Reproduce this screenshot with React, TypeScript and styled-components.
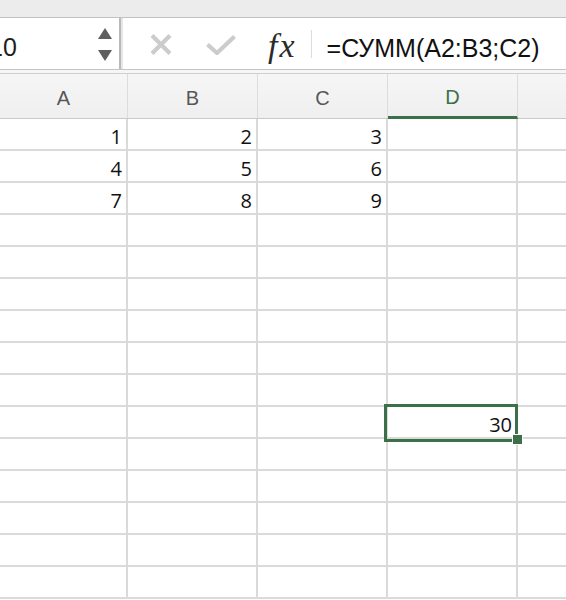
import React from 'react';
import styled, { createGlobalStyle } from 'styled-components';

const GlobalStyle = createGlobalStyle`
  html, body {
    margin: 0;
    padding: 0;
    background: #fff;
    overflow: hidden;
  }
  body {
    font-family: 'Liberation Sans', Arial, sans-serif;
  }
`;

const GREEN = '#3c7049';
const GRID = '#dadada';

const Window = styled.div`
  width: 566px;
  height: 600px;
  overflow: hidden;
  display: flex;
  flex-direction: column;
  background: #fff;
`;

const TopStrip = styled.div`
  height: 17px;
  flex-shrink: 0;
  background: #ececec;
  border-bottom: 1px solid #c2c2c2;
`;

const Toolbar = styled.div`
  height: 51px;
  flex-shrink: 0;
  display: flex;
  border-bottom: 1px solid #c4c4c4;
`;

const NameBox = styled.div`
  width: 119px;
  display: flex;
  align-items: center;
  justify-content: space-between;
  border-right: 2px solid #b9b9b9;
  box-shadow: 2px 0 0 #e6e6e6;
  overflow: hidden;
`;

// the name box is scrolled, so the first digit is clipped at the window edge
const NameText = styled.span`
  margin-left: -11px;
  margin-top: 7px;
  font-size: 25px;
  color: #1e1e1e;
`;

const Spinner = styled.div`
  display: flex;
  flex-direction: column;
  gap: 11px;
  margin-right: 7px;
  margin-top: 1px;
`;

const FormulaArea = styled.div`
  flex: 1;
  display: flex;
  align-items: center;
  padding-left: 29px;
`;

const IconSlot = styled.span<{ $gap: number }>`
  display: flex;
  margin-left: ${({ $gap }) => $gap}px;
  margin-top: 2px;
`;

const Fx = styled.span`
  margin-left: 32px;
  margin-top: 4px;
  font-family: 'Liberation Serif', 'DejaVu Serif', serif;
  font-style: italic;
  font-size: 34px;
  color: #2b2b2b;
  letter-spacing: 2px;
`;

const Separator = styled.span`
  width: 1px;
  height: 28px;
  margin-left: 14px;
  background: #dcdcdc;
`;

const FormulaText = styled.span`
  margin-left: 15px;
  margin-top: 9px;
  font-size: 25px;
  color: #111;
  white-space: nowrap;
`;

const Divider = styled.div`
  height: 3px;
  flex-shrink: 0;
  background: #f6f6f6;
  border-bottom: 1px solid #cfcfcf;
`;

const columns = '128px 130px 130px 130px 1fr';

const HeaderRow = styled.div`
  display: grid;
  grid-template-columns: ${columns};
  height: 45px;
  flex-shrink: 0;
  box-sizing: border-box;
  background: linear-gradient(#f6f6f6, #efefef);
  border-bottom: 1px solid #c9c9c9;
`;

const HeadCell = styled.div<{ $active?: boolean; $last?: boolean }>`
  display: flex;
  align-items: center;
  justify-content: center;
  padding-top: 5px;
  box-sizing: border-box;
  font-size: 20px;
  color: ${({ $active }) => ($active ? GREEN : '#575757')};
  border-right: ${({ $last }) => ($last ? 'none' : '1px solid #dcdcdc')};
  border-bottom: ${({ $active }) => ($active ? `3px solid ${GREEN}` : 'none')};
  margin-bottom: ${({ $active }) => ($active ? '-1px' : '0')};
`;

const Row = styled.div`
  display: grid;
  grid-template-columns: ${columns};
  height: 32px;
  flex-shrink: 0;
`;

const Cell = styled.div<{ $last?: boolean; $selected?: boolean }>`
  position: ${({ $selected }) => ($selected ? 'relative' : 'static')};
  box-sizing: border-box;
  padding: 6px 4px 0 0;
  text-align: right;
  font-family: 'Open Sans', 'Noto Sans', sans-serif;
  font-size: 20px;
  line-height: 24px;
  color: #111;
  border-bottom: 2px solid ${GRID};
  border-right: ${({ $last }) => ($last ? 'none' : `2px solid ${GRID}`)};
`;

const Selection = styled.div`
  position: absolute;
  top: -3px;
  left: -4px;
  right: -2px;
  bottom: -5px;
  border: 3px solid ${GREEN};
  z-index: 1;
`;

const FillHandle = styled.div`
  position: absolute;
  right: -7px;
  bottom: -8px;
  width: 9px;
  height: 9px;
  background: ${GREEN};
  border: 1px solid #fff;
  z-index: 2;
`;

const CellValue = styled.span`
  position: relative;
  z-index: 3;
`;

const data: (number | null)[][] = [
  [1, 2, 3, null],
  [4, 5, 6, null],
  [7, 8, 9, null],
];

const ROW_COUNT = 15;
const SELECTED_ROW = 9;

const UpArrow = () => (
  <svg width="14" height="11" viewBox="0 0 14 11">
    <polygon points="7,0 14,11 0,11" fill="#5f5f5f" />
  </svg>
);

const DownArrow = () => (
  <svg width="14" height="11" viewBox="0 0 14 11">
    <polygon points="0,0 14,0 7,11" fill="#5f5f5f" />
  </svg>
);

const CancelIcon = () => (
  <svg width="22" height="21" viewBox="0 0 22 21">
    <path d="M2 1.5 L20 19.5 M20 1.5 L2 19.5" stroke="#cccccc" strokeWidth="4.2" />
  </svg>
);

const ConfirmIcon = () => (
  <svg width="30" height="20" viewBox="0 0 30 20">
    <path d="M1.5 9.5 L11 18 L28.5 1.5" stroke="#cccccc" strokeWidth="4.2" fill="none" />
  </svg>
);

const App: React.FC = () => {
  const rows = Array.from({ length: ROW_COUNT }, (_, i) => {
    const values = data[i] ? [...data[i]] : [null, null, null, null];
    if (i === SELECTED_ROW) values[3] = 30;
    return values;
  });

  return (
    <Window>
      <GlobalStyle />
      <TopStrip />
      <Toolbar>
        <NameBox>
          <NameText>10</NameText>
          <Spinner>
            <UpArrow />
            <DownArrow />
          </Spinner>
        </NameBox>
        <FormulaArea>
          <IconSlot $gap={0}>
            <CancelIcon />
          </IconSlot>
          <IconSlot $gap={34}>
            <ConfirmIcon />
          </IconSlot>
          <Fx>fx</Fx>
          <Separator />
          <FormulaText>=СУММ(A2:B3;C2)</FormulaText>
        </FormulaArea>
      </Toolbar>
      <Divider />
      <HeaderRow>
        <HeadCell>A</HeadCell>
        <HeadCell>B</HeadCell>
        <HeadCell>C</HeadCell>
        <HeadCell $active>D</HeadCell>
        <HeadCell $last />
      </HeaderRow>
      {rows.map((values, r) => (
        <Row key={r}>
          {values.map((v, c) => {
            const selected = r === SELECTED_ROW && c === 3;
            return (
              <Cell key={c} $selected={selected}>
                {selected && <Selection />}
                {selected && <FillHandle />}
                {selected ? <CellValue>{v}</CellValue> : v}
              </Cell>
            );
          })}
          <Cell $last />
        </Row>
      ))}
    </Window>
  );
};

export default App;
